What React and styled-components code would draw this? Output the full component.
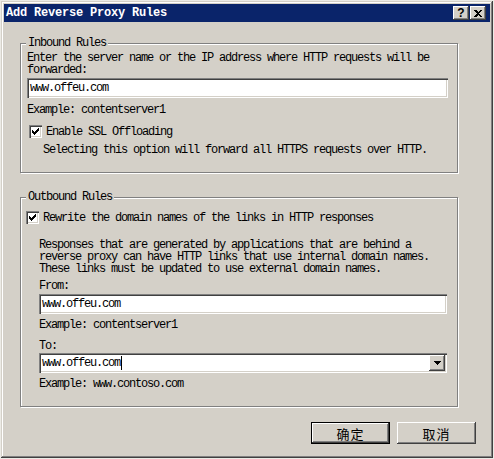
import React from "react";
import styled, { createGlobalStyle } from "styled-components";

const GlobalStyle = createGlobalStyle`
  html, body { margin: 0; padding: 0; }
  body {
    background: #ecebe6;
    font-family: "Liberation Mono", "Noto Sans CJK SC", monospace;
    font-size: 12px;
    color: #000;
  }
`;

const sunken = `
  box-shadow: inset 1px 1px #808080, inset 2px 2px #404040,
    inset -1px -1px #ffffff, inset -2px -2px #d4d0c8;
`;
const raised = `
  box-shadow: inset -1px -1px #404040, inset 1px 1px #ffffff,
    inset -2px -2px #808080, inset 2px 2px #d4d0c8;
`;

const Window = styled.div`
  margin: 1px 0 0 1px;
  width: 492px;
  height: 457px;
  box-sizing: border-box;
  padding: 3px;
  background: #d4d0c8;
  box-shadow: inset -1px -1px #404040, inset 1px 1px #d4d0c8,
    inset -2px -2px #808080, inset 2px 2px #ffffff;
  display: flex;
  flex-direction: column;
`;

const TitleBar = styled.div`
  height: 18px;
  background: #0a246a;
  display: flex;
  align-items: center;
  padding: 0 4px 0 2px;
  color: #fff;
  font: bold 12px/12px "Liberation Mono", monospace;
  letter-spacing: -0.2px;
`;

const TitleText = styled.span`
  flex: 1;
  white-space: pre;
`;

const CaptionButton = styled.span`
  width: 16px;
  height: 14px;
  box-sizing: border-box;
  background: #d4d0c8;
  ${raised}
  display: inline-flex;
  align-items: center;
  justify-content: center;
  margin-left: ${(p) => p.$gap || 0}px;
  color: #000;
  font: bold 12px/12px "Liberation Sans", sans-serif;
  letter-spacing: 0;
`;

const Group = styled.div`
  margin: ${(p) => p.$top}px 0 0 16px;
  width: 438px;
  box-sizing: border-box;
  border: 1px solid #808080;
  box-shadow: inset 1px 1px #ffffff, 1px 1px #ffffff;
  display: flex;
  flex-direction: column;
`;

const Legend = styled.div`
  align-self: flex-start;
  margin: -7px 0 0 5px;
  padding: 0 2px;
  background: #d4d0c8;
  line-height: 12px;
  letter-spacing: -1.2px;
  white-space: pre;
`;

const Content = styled.div`
  display: flex;
  flex-direction: column;
  padding: ${(p) => p.$pad};
`;

const Sub = styled.div`
  display: flex;
  flex-direction: column;
  padding-left: ${(p) => p.$indent}px;
`;

const Text = styled.div`
  line-height: 12px;
  letter-spacing: -1.2px;
  white-space: pre;
  margin-top: ${(p) => p.$mt || 0}px;
  margin-left: ${(p) => p.$ml || 0}px;
`;

const Field = styled.div`
  height: 20px;
  box-sizing: border-box;
  background: #fff;
  ${sunken}
  display: flex;
  align-items: center;
  padding: 0 2px 0 3px;
  margin-top: ${(p) => p.$mt || 0}px;
  letter-spacing: -1.2px;
  white-space: pre;
`;

const FieldValue = styled.span`
  flex: 1;
  display: flex;
  align-items: center;
  line-height: 12px;
`;

const Caret = styled.span`
  display: inline-block;
  width: 1px;
  height: 14px;
  background: #000;
  margin-left: 1px;
`;

const DropButton = styled.span`
  width: 16px;
  height: 16px;
  box-sizing: border-box;
  background: #d4d0c8;
  ${raised}
  display: inline-flex;
  align-items: center;
  justify-content: center;
`;

const CheckRow = styled.div`
  display: flex;
  align-items: center;
  gap: ${(p) => p.$gap || 4}px;
  margin-top: ${(p) => p.$mt || 0}px;
  margin-left: ${(p) => p.$ml || 0}px;
  height: 13px;
  line-height: 12px;
  letter-spacing: -1.2px;
  white-space: pre;
`;

const CheckBox = styled.span`
  width: 13px;
  height: 13px;
  flex: none;
  box-sizing: border-box;
  background: #fff;
  ${sunken}
  display: inline-flex;
`;

const ButtonRow = styled.div`
  display: flex;
  justify-content: flex-end;
  gap: 7px;
  margin-top: 15px;
  padding-right: 14px;
`;

const Button = styled.button`
  width: 79px;
  height: 22px;
  box-sizing: border-box;
  margin: 0;
  padding: 0;
  border: ${(p) => (p.$default ? "1px solid #000" : "none")};
  background: #d4d0c8;
  ${raised}
  font: 13px/1 "Noto Sans CJK SC", sans-serif;
  color: #000;
  letter-spacing: 1px;
  display: inline-flex;
  align-items: center;
  justify-content: center;
`;

const Check = () => (
  <svg width="13" height="13" viewBox="0 0 13 13" shapeRendering="crispEdges">
    <path d="M3 5 L5 7 L10 2 L10 5 L5 10 L3 8 Z" fill="#000" />
  </svg>
);

export default function App() {
  return (
    <>
      <GlobalStyle />
      <Window>
        <TitleBar>
          <TitleText>Add Reverse Proxy Rules</TitleText>
          <CaptionButton>?</CaptionButton>
          <CaptionButton $gap={1}>
            <svg width="8" height="7" viewBox="0 0 8 7" shapeRendering="crispEdges">
              <path d="M0 0 L2 0 L4 2 L6 0 L8 0 L5 3.5 L8 7 L6 7 L4 5 L2 7 L0 7 L3 3.5 Z" fill="#000" />
            </svg>
          </CaptionButton>
        </TitleBar>

        <Group $top={21}>
          <Legend>Inbound Rules</Legend>
          <Content $pad="0 9px 16px 6px">
            <Text $mt={3}>Enter the server name or the IP address where HTTP requests will be</Text>
            <Text>forwarded:</Text>
            <Field $mt={2}>
              <FieldValue>www.offeu.com</FieldValue>
            </Field>
            <Text $mt={6}>Example: contentserver1</Text>
            <CheckRow $mt={9} $ml={2} $gap={4}>
              <CheckBox>
                <Check />
              </CheckBox>
              Enable SSL Offloading
            </CheckRow>
            <Text $mt={6} $ml={16}>Selecting this option will forward all HTTPS requests over HTTP.</Text>
          </Content>
        </Group>

        <Group $top={24}>
          <Legend>Outbound Rules</Legend>
          <Content $pad="0 10px 16px 4px">
            <CheckRow $mt={8} $ml={1} $gap={4}>
              <CheckBox>
                <Check />
              </CheckBox>
              Rewrite the domain names of the links in HTTP responses
            </CheckRow>
            <Sub $indent={14}>
              <Text $mt={15}>Responses that are generated by applications that are behind a</Text>
              <Text>reverse proxy can have HTTP links that use internal domain names.</Text>
              <Text>These links must be updated to use external domain names.</Text>
              <Text $mt={5}>From:</Text>
              <Field $mt={2}>
                <FieldValue>www.offeu.com</FieldValue>
              </Field>
              <Text $mt={5}>Example: contentserver1</Text>
              <Text $mt={9}>To:</Text>
              <Field $mt={1}>
                <FieldValue>
                  www.offeu.com
                  <Caret />
                </FieldValue>
                <DropButton>
                  <svg width="7" height="4" viewBox="0 0 7 4" shapeRendering="crispEdges">
                    <path d="M0 0 L7 0 L3.5 4 Z" fill="#000" />
                  </svg>
                </DropButton>
              </Field>
              <Text $mt={5}>Example: www.contoso.com</Text>
            </Sub>
          </Content>
        </Group>

        <ButtonRow>
          <Button $default>确定</Button>
          <Button>取消</Button>
        </ButtonRow>
      </Window>
    </>
  );
}
